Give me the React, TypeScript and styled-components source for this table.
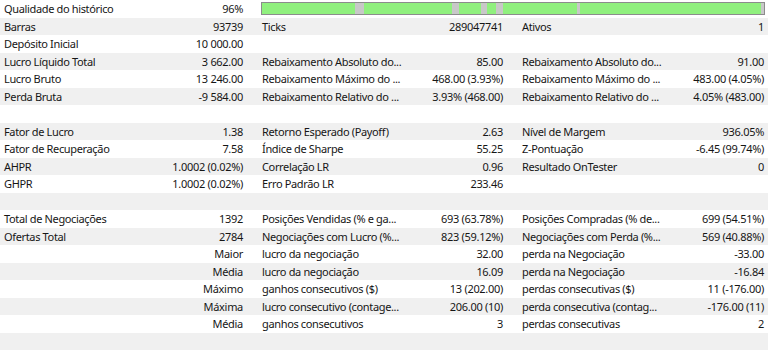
import styled, { createGlobalStyle } from 'styled-components'

type Row = [string, string, string, string, string, string] | null

const rows: Row[] = [
  ['Barras', '93739', 'Ticks', '289047741', 'Ativos', '1'],
  ['Depósito Inicial', '10 000.00', '', '', '', ''],
  ['Lucro Líquido Total', '3 662.00', 'Rebaixamento Absoluto do...', '85.00', 'Rebaixamento Absoluto do...', '91.00'],
  ['Lucro Bruto', '13 246.00', 'Rebaixamento Máximo do ...', '468.00 (3.93%)', 'Rebaixamento Máximo do ...', '483.00 (4.05%)'],
  ['Perda Bruta', '-9 584.00', 'Rebaixamento Relativo do ...', '3.93% (468.00)', 'Rebaixamento Relativo do ...', '4.05% (483.00)'],
  null,
  ['Fator de Lucro', '1.38', 'Retorno Esperado (Payoff)', '2.63', 'Nível de Margem', '936.05%'],
  ['Fator de Recuperação', '7.58', 'Índice de Sharpe', '55.25', 'Z-Pontuação', '-6.45 (99.74%)'],
  ['AHPR', '1.0002 (0.02%)', 'Correlação LR', '0.96', 'Resultado OnTester', '0'],
  ['GHPR', '1.0002 (0.02%)', 'Erro Padrão LR', '233.46', '', ''],
  null,
  ['Total de Negociações', '1392', 'Posições Vendidas (% e ga...', '693 (63.78%)', 'Posições Compradas (% de...', '699 (54.51%)'],
  ['Ofertas Total', '2784', 'Negociações com Lucro (%...', '823 (59.12%)', 'Negociações com Perda (%...', '569 (40.88%)'],
  ['', 'Maior', 'lucro da negociação', '32.00', 'perda na Negociação', '-33.00'],
  ['', 'Média', 'lucro da negociação', '16.09', 'perda na Negociação', '-16.84'],
  ['', 'Máximo', 'ganhos consecutivos ($)', '13 (202.00)', 'perdas consecutivas ($)', '11 (-176.00)'],
  ['', 'Máxima', 'lucro consecutivo (contage...', '206.00 (10)', 'perda consecutiva (contag...', '-176.00 (11)'],
  ['', 'Média', 'ganhos consecutivos', '3', 'perdas consecutivas', '2'],
  null,
]

// history quality strip, widths in px of the inner bar (502 total)
const quality: [number, boolean][] = [
  [93, true], [9, false], [88, true], [7, false], [22, true], [6, false],
  [9, true], [7, false], [74, true], [3, false], [181, true], [3, false],
]

function App() {
  return (
    <>
      <GlobalStyle />
      <Report>
        <ReportRow $striped={false}>
          <Label>Qualidade do histórico</Label>
          <Value>96%</Value>
          <Gap />
          <QualityCell>
            <QualityBar>
              {quality.map(([w, ok], i) => (
                <Segment key={i} $ok={ok} style={{ width: w }} />
              ))}
            </QualityBar>
          </QualityCell>
        </ReportRow>
        {rows.map((r, i) => (
          <ReportRow key={i} $striped={i % 2 === 0}>
            {r && (
              <>
                <Label>{r[0]}</Label>
                <Value>{r[1]}</Value>
                <Gap />
                <Label>{r[2]}</Label>
                <Value>{r[3]}</Value>
                <Gap />
                <Label>{r[4]}</Label>
                <Value>{r[5]}</Value>
              </>
            )}
          </ReportRow>
        ))}
      </Report>
    </>
  )
}

export default App

const GlobalStyle = createGlobalStyle`
  html, body {
    margin: 0;
    padding: 0;
    background: #ffffff;
  }
  body {
    font-family: 'Noto Sans', 'Open Sans', sans-serif;
    font-size: 11px;
    color: #161616;
  }
`

const Report = styled.div`
  width: 768px;
`

const ReportRow = styled.div<{ $striped: boolean }>`
  display: grid;
  grid-template-columns: 170px 77px 11px 157px 92px 11px 152px 98px;
  height: 17.5px;
  align-items: center;
  background: ${(p) => (p.$striped ? '#f0f0f0' : '#ffffff')};
`

const Label = styled.div`
  padding-left: 4px;
  white-space: nowrap;
  overflow: hidden;
  letter-spacing: -0.35px;
`

const Value = styled.div`
  padding-right: 4px;
  text-align: right;
  white-space: nowrap;
  letter-spacing: -0.3px;
`

const Gap = styled.div``

const QualityCell = styled.div`
  grid-column: 4 / 9;
  padding: 0 3px;
  align-self: start;
  padding-top: 2px;
`

const QualityBar = styled.div`
  display: flex;
  height: 11px;
  border: 1px solid #8c8c8c;
  background: #90f07e;
`

const Segment = styled.div<{ $ok: boolean }>`
  height: 100%;
  background: ${(p) => (p.$ok ? '#90f07e' : '#c8c8c8')};
`
